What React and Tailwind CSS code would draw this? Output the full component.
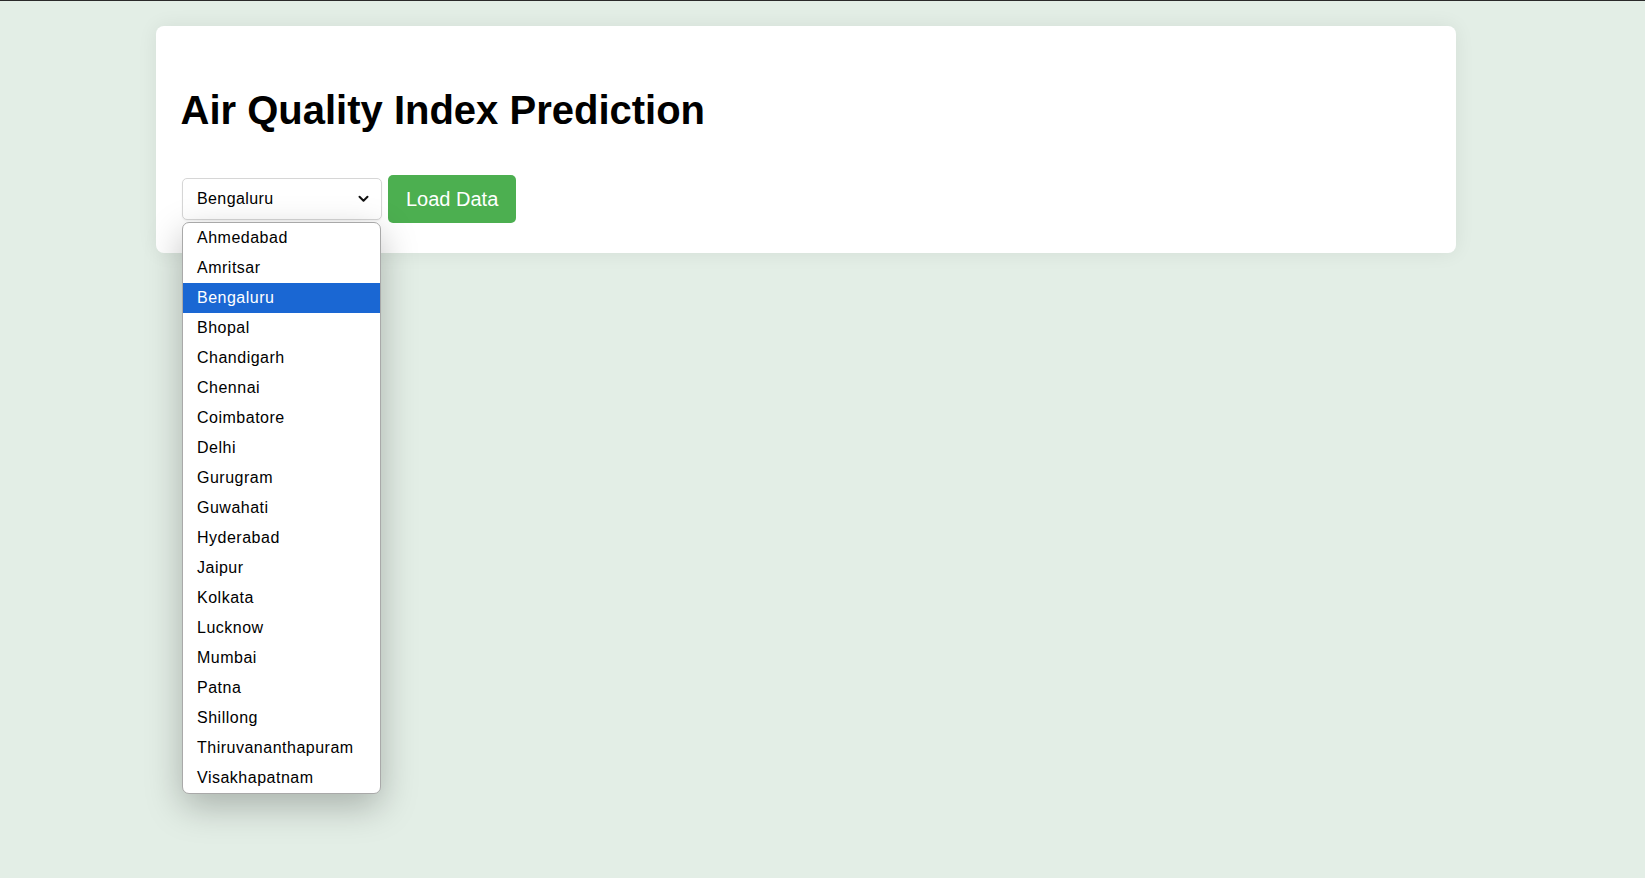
import React from "react";

const cities = [
  "Ahmedabad",
  "Amritsar",
  "Bengaluru",
  "Bhopal",
  "Chandigarh",
  "Chennai",
  "Coimbatore",
  "Delhi",
  "Gurugram",
  "Guwahati",
  "Hyderabad",
  "Jaipur",
  "Kolkata",
  "Lucknow",
  "Mumbai",
  "Patna",
  "Shillong",
  "Thiruvananthapuram",
  "Visakhapatnam",
];

export default function App() {
  const selected = "Bengaluru";

  return (
    <div
      className="min-h-[878px] bg-[#e3eee6] text-black"
      style={{ fontFamily: '"Liberation Sans", Arial, sans-serif' }}
    >
      <div className="h-px bg-[#2a2a2a]" />
      <div className="ml-[156px] mt-[25px] w-[1300px] rounded-lg bg-white pt-[30px] pb-[30px] pl-[26px] pr-[26px] shadow-[0_0_20px_rgba(0,0,0,0.07)]">
        <h1 className="-ml-[1.5px] mt-[31px] text-[40px] font-bold leading-[46px]">
          Air Quality Index Prediction
        </h1>

        <div className="mt-[42px] flex items-center gap-[6px]">
          <div className="relative">
            <div className="flex h-[42px] w-[200px] items-center justify-between rounded-[5px] border border-[#d6d6d6] bg-white pl-[14px] pr-[12px] text-[16px] tracking-[0.4px] shadow-[0_1px_2px_rgba(0,0,0,0.05)]">
              <span>{selected}</span>
              <svg width="11" height="8" viewBox="0 0 11 8" fill="none">
                <path
                  d="M1.5 1.8 L5.5 5.8 L9.5 1.8"
                  stroke="#111"
                  strokeWidth="2"
                  strokeLinecap="round"
                  strokeLinejoin="round"
                />
              </svg>
            </div>

            {/* open list */}
            <div className="absolute left-0 top-[44px] z-10 w-[199px] overflow-hidden rounded-[7px] border border-[#a9a9a9] bg-white shadow-[0_12px_36px_rgba(0,0,0,0.26)]">
              {cities.map((city) => (
                <div
                  key={city}
                  className={
                    city === selected
                      ? "h-[30px] bg-[#1a67d3] pl-[14px] text-[16px] leading-[30px] tracking-[0.5px] text-white"
                      : "h-[30px] pl-[14px] text-[16px] leading-[30px] tracking-[0.5px] text-black"
                  }
                >
                  {city}
                </div>
              ))}
            </div>
          </div>

          <button className="h-[48px] rounded-[5px] bg-[#4caf50] px-[18px] text-[20px] text-white">
            Load Data
          </button>
        </div>
      </div>
    </div>
  );
}
